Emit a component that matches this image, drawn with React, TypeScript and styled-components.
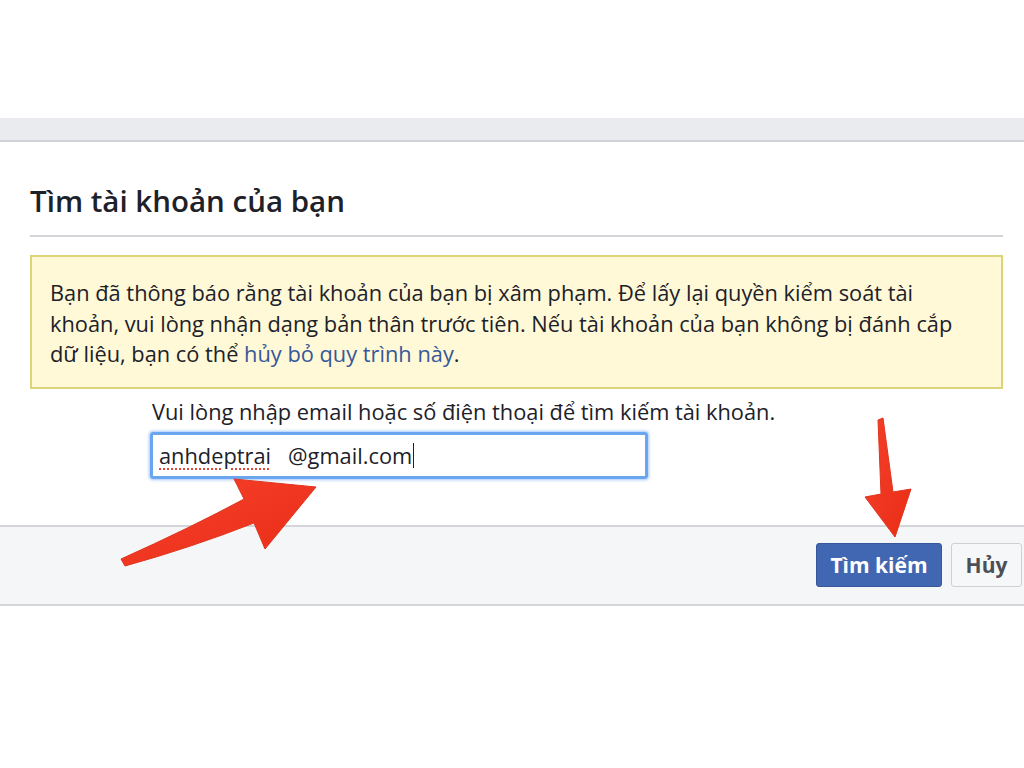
import React from "react";
import styled, { createGlobalStyle } from "styled-components";

const Global = createGlobalStyle`
  html, body { margin: 0; padding: 0; background: #ffffff; }
  body { font-family: "Open Sans", "Liberation Sans", Arial, sans-serif; color: #1d2129; }
`;

const Page = styled.div`
  position: relative;
  width: 1024px;
  height: 768px;
  overflow: hidden;
  background: #ffffff;
`;

const TopSpace = styled.div`
  height: 118px;
`;

const GrayBar = styled.div`
  height: 22px;
  background: #e9ebee;
  border-bottom: 2px solid #cfd2d6;
`;

const Content = styled.div`
  padding: 0 21px 0 30px;
`;

const Header = styled.div`
  padding: 42px 0 17px 0;
  border-bottom: 2px solid #d3d5d9;
`;

const Title = styled.h2`
  margin: 0;
  font-size: 29.5px;
  line-height: 34px;
  font-weight: 600;
  color: #1d2129;
`;

const Notice = styled.div`
  margin-top: 18px;
  background: #fff9d7;
  border: 2px solid #dcd478;
  padding: 21px 18px 17px 18px;
  font-size: 21.8px;
  line-height: 30.5px;
  color: #1d2129;
`;

const Link = styled.a`
  color: #365899;
  text-decoration: none;
`;

const Form = styled.div`
  padding: 11px 0 46px 120px;
`;

const Label = styled.div`
  font-size: 21.8px;
  line-height: 24px;
  color: #1d2129;
  padding-left: 2px;
`;

const FakeInput = styled.div`
  margin-top: 8px;
  box-sizing: border-box;
  width: 498px;
  height: 47px;
  border: 3px solid #6aa5f0;
  border-radius: 3px;
  box-shadow: 0 0 3px 1px rgba(90, 150, 240, 0.55);
  display: flex;
  align-items: center;
  padding-left: 6px;
  font-size: 21.8px;
  color: #1d2129;
  white-space: pre;
`;

const Misspelled = styled.span`
  text-decoration: underline dotted #e2453c;
  text-decoration-thickness: 2px;
  text-underline-offset: 5px;
`;

const Caret = styled.span`
  display: inline-block;
  width: 1px;
  height: 25px;
  background: #1d2129;
  margin-left: 1px;
  vertical-align: middle;
`;

const Footer = styled.div`
  height: 77px;
  background: #f5f6f7;
  border-top: 2px solid #d3d5d9;
  border-bottom: 2px solid #d3d5d9;
  display: flex;
  align-items: center;
  justify-content: flex-end;
  gap: 9px;
  padding-right: 2px;
`;

const Button = styled.button<{ $primary?: boolean }>`
  box-sizing: border-box;
  height: 44px;
  padding: 0;
  border-radius: 3px;
  font-family: "Open Sans", "Liberation Sans", Arial, sans-serif;
  font-weight: 700;
  font-size: 21px;
  border: 1px solid ${(p) => (p.$primary ? "#36589b" : "#ced0d4")};
  background: ${(p) => (p.$primary ? "#4267b2" : "#f6f7f9")};
  color: ${(p) => (p.$primary ? "#ffffff" : "#4b4f56")};
  width: ${(p) => (p.$primary ? "126px" : "71px")};
`;

const Overlay = styled.svg`
  position: absolute;
  left: 0;
  top: 0;
  pointer-events: none;
`;

export default function App() {
  return (
    <>
      <Global />
      <Page>
        <TopSpace />
        <GrayBar />
        <Content>
          <Header>
            <Title>Tìm tài khoản của bạn</Title>
          </Header>
          <Notice>
            Bạn đã thông báo rằng tài khoản của bạn bị xâm phạm. Để lấy lại quyền kiểm soát tài khoản, vui lòng
            nhận dạng bản thân trước tiên. Nếu tài khoản của bạn không bị đánh cắp dữ liệu, bạn có thể{" "}
            <Link>hủy bỏ quy trình này</Link>.
          </Notice>
          <Form>
            <Label>Vui lòng nhập email hoặc số điện thoại để tìm kiếm tài khoản.</Label>
            <FakeInput>
              <Misspelled>anhdeptrai</Misspelled>
              {"   @gmail.com"}
              <Caret />
            </FakeInput>
          </Form>
        </Content>
        <Footer>
          <Button $primary>Tìm kiếm</Button>
          <Button>Hủy</Button>
        </Footer>
        <Overlay width="1024" height="768" viewBox="0 0 1024 768">
          <defs>
            <linearGradient id="arrowFill" x1="0" y1="0" x2="1" y2="1">
              <stop offset="0" stopColor="#f5402a" />
              <stop offset="1" stopColor="#ea2d17" />
            </linearGradient>
          </defs>
          <path
            d="M121,559 Q190,528 244,499 L234,479 L316,487 L265,549 L254,523 Q190,548 125,566 Z"
            fill="url(#arrowFill)"
            stroke="#e0351f"
            strokeWidth="1"
            strokeLinejoin="round"
          />
          <path
            d="M878,420 L883,418 L893,492 L911,489 L895,537 L865,497 L881,494 Z"
            fill="url(#arrowFill)"
            stroke="#e0351f"
            strokeWidth="1"
            strokeLinejoin="round"
          />
        </Overlay>
      </Page>
    </>
  );
}
